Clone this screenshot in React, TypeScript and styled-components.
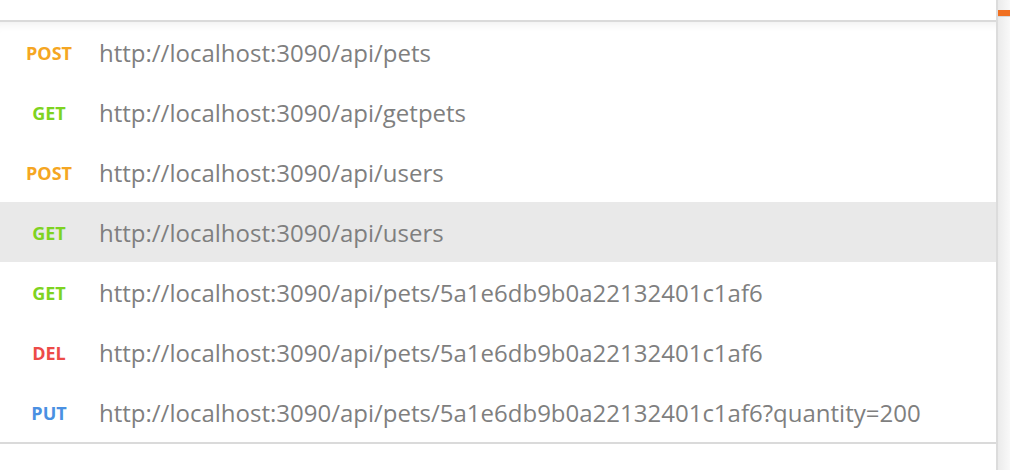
import React from "react";
import styled, { createGlobalStyle } from "styled-components";

const Global = createGlobalStyle`
  html, body { margin: 0; padding: 0; background: #fff; }
  body { font-family: "Open Sans", "DejaVu Sans", sans-serif; width: 1010px; height: 470px; overflow: hidden; }
`;

const Frame = styled.div`
  display: flex;
  width: 1010px;
  height: 470px;
`;

const Main = styled.div`
  width: 996px;
  display: flex;
  flex-direction: column;
`;

const TopSpace = styled.div`
  height: 20px;
  border-bottom: 2px solid #dadada;
`;

const List = styled.div`
  display: flex;
  flex-direction: column;
  border-bottom: 2px solid #dadada;
  box-shadow: inset 0 10px 10px -8px rgba(0, 0, 0, 0.07);
`;

const Row = styled.div<{ $active?: boolean }>`
  height: 60px;
  display: flex;
  align-items: center;
  background: ${(p) => (p.$active ? "#e9e9e9" : "transparent")};
`;

const Method = styled.span<{ $color: string }>`
  width: 74px;
  margin-left: 12px;
  padding-top: 2px;
  text-align: center;
  font-weight: 700;
  font-size: 18px;
  color: ${(p) => p.$color};
`;

const Url = styled.span`
  margin-left: 13px;
  font-size: 24px;
  color: #7f7f7f;
  white-space: nowrap;
`;

const Side = styled.div`
  flex: 1;
  border-left: 2px solid #dcdcdc;
  background: linear-gradient(to right, #ebebeb, #f9f9f9);
  padding-top: 10px;
`;

const Orange = styled.div`
  height: 6px;
  background: #f07021;
  border-bottom: 1px solid #d8d8d8;
`;

const COLORS: Record<string, string> = {
  POST: "#f5a623",
  GET: "#7ed321",
  DEL: "#ed4b48",
  PUT: "#4a90e2",
};

const rows = [
  ["POST", "http://localhost:3090/api/pets"],
  ["GET", "http://localhost:3090/api/getpets"],
  ["POST", "http://localhost:3090/api/users"],
  ["GET", "http://localhost:3090/api/users"],
  ["GET", "http://localhost:3090/api/pets/5a1e6db9b0a22132401c1af6"],
  ["DEL", "http://localhost:3090/api/pets/5a1e6db9b0a22132401c1af6"],
  ["PUT", "http://localhost:3090/api/pets/5a1e6db9b0a22132401c1af6?quantity=200"],
];

export default function App() {
  return (
    <>
      <Global />
      <Frame>
        <Main>
          <TopSpace />
          <List>
            {rows.map(([m, u], i) => (
              <Row key={i} $active={i === 3}>
                <Method $color={COLORS[m]}>{m}</Method>
                <Url>{u}</Url>
              </Row>
            ))}
          </List>
        </Main>
        <Side>
          <Orange />
        </Side>
      </Frame>
    </>
  );
}
